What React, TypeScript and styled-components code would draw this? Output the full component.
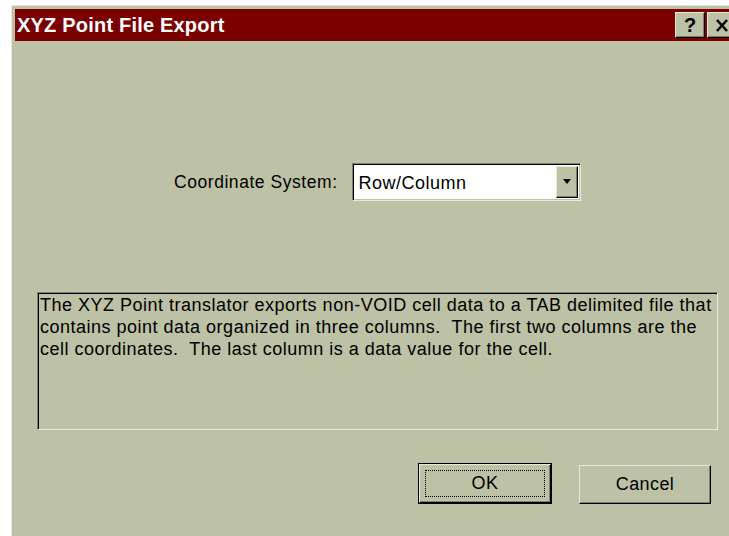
import React from "react";
import styled, { createGlobalStyle } from "styled-components";

const Global = createGlobalStyle`
  html, body {
    margin: 0;
    padding: 0;
    background: #ffffff;
  }
  body {
    font-family: "Liberation Sans", Arial, sans-serif;
  }
`;

const face = "#bdc1a5";
const hilite = "#e6e8d8";
const shadow = "#7e8170";

const Screen = styled.div`
  width: 729px;
  height: 536px;
  overflow: hidden;
  padding: 5px 0 0 11px;
  box-sizing: border-box;
`;

const Window = styled.div`
  width: 729px;
  height: 560px;
  background: ${face};
  border-top: 1px solid ${hilite};
  border-left: 1px solid ${hilite};
  padding: 3px 3px 0 3px;
  box-sizing: border-box;
  display: flex;
  flex-direction: column;
`;

const TitleBar = styled.div`
  height: 32px;
  background: #7b0000;
  display: flex;
  align-items: center;
  padding-left: 2px;
`;

const Title = styled.div`
  flex: 1;
  color: #ffffff;
  font-weight: bold;
  font-size: 20px;
  letter-spacing: 0.2px;
`;

const CaptionButton = styled.div<{ $gap?: number }>`
  width: 30px;
  height: 26px;
  background: ${face};
  box-sizing: border-box;
  border-top: 1px solid ${hilite};
  border-left: 1px solid ${hilite};
  border-right: 1px solid #000;
  border-bottom: 1px solid #000;
  box-shadow: inset -1px -1px 0 ${shadow};
  display: flex;
  align-items: center;
  justify-content: center;
  font-weight: bold;
  font-size: 20px;
  color: #000;
  margin-right: ${(p) => p.$gap ?? 0}px;
`;

const Body = styled.div`
  display: flex;
  flex-direction: column;
  padding-left: 22px;
  width: 681px;
`;

const FieldRow = styled.div`
  display: flex;
  align-items: center;
  margin-top: 122px;
  padding-left: 137px;
  gap: 14px;
`;

const Label = styled.div`
  font-size: 17.5px;
  color: #000;
  letter-spacing: 0.55px;
  white-space: nowrap;
`;

const Combo = styled.div`
  width: 229px;
  height: 38px;
  box-sizing: border-box;
  background: #ffffff;
  border-top: 1px solid ${shadow};
  border-left: 1px solid ${shadow};
  border-right: 1px solid ${hilite};
  border-bottom: 1px solid ${hilite};
  box-shadow: inset 1px 1px 0 #000, inset -1px -1px 0 ${face};
  display: flex;
  align-items: center;
  padding: 2px;
`;

const ComboText = styled.div`
  flex: 1;
  font-size: 18px;
  letter-spacing: 0.5px;
  padding-left: 4px;
  padding-top: 3px;
  color: #000;
`;

const DropButton = styled.div`
  width: 22px;
  height: 32px;
  box-sizing: border-box;
  background: ${face};
  border-top: 1px solid ${hilite};
  border-left: 1px solid ${hilite};
  border-right: 1px solid #000;
  border-bottom: 1px solid #000;
  box-shadow: inset -1px -1px 0 ${shadow};
  display: flex;
  align-items: center;
  justify-content: center;
`;

const Description = styled.div`
  margin-top: 91px;
  height: 138px;
  box-sizing: border-box;
  border-top: 1px solid ${shadow};
  border-left: 1px solid ${shadow};
  border-right: 1px solid ${hilite};
  border-bottom: 1px solid ${hilite};
  box-shadow: inset 1px 1px 0 #000, inset -1px -1px 0 ${face};
  padding: 1px 0 0 2px;
  font-size: 18px;
  line-height: 22px;
  letter-spacing: 0.5px;
  white-space: nowrap;
  overflow: hidden;
  color: #000;
`;

const ButtonRow = styled.div`
  display: flex;
  justify-content: flex-end;
  align-items: flex-start;
  gap: 27px;
  margin-top: 33px;
  padding-right: 7px;
`;

const PushButton = styled.div<{ $default?: boolean }>`
  width: ${(p) => (p.$default ? 134 : 132)}px;
  height: ${(p) => (p.$default ? 41 : 39)}px;
  margin-top: ${(p) => (p.$default ? 0 : 2)}px;
  box-sizing: border-box;
  background: ${face};
  border: ${(p) => (p.$default ? "1px solid #000" : "none")};
  display: flex;
  font-size: 18px;
  letter-spacing: 0.4px;
  color: #000;
`;

const ButtonFace = styled.div`
  flex: 1;
  box-sizing: border-box;
  border-top: 1px solid ${hilite};
  border-left: 1px solid ${hilite};
  border-right: 1px solid #000;
  border-bottom: 1px solid #000;
  box-shadow: inset -1px -1px 0 ${shadow};
  display: flex;
  padding: 5px;
`;

const FocusRing = styled.div<{ $show?: boolean }>`
  flex: 1;
  border: 1px dotted ${(p) => (p.$show ? "#000" : "transparent")};
  display: flex;
  align-items: center;
  justify-content: center;
`;

export default function App() {
  return (
    <>
      <Global />
      <Screen>
        <Window>
          <TitleBar>
            <Title>XYZ Point File Export</Title>
            <CaptionButton $gap={2}>?</CaptionButton>
            <CaptionButton>
              <svg width="14" height="13" viewBox="0 0 14 13">
                <path d="M2 1 L12 12 M12 1 L2 12" stroke="#000" strokeWidth="2.6" />
              </svg>
            </CaptionButton>
          </TitleBar>
          <Body>
            <FieldRow>
              <Label>Coordinate System:</Label>
              <Combo>
                <ComboText>Row/Column</ComboText>
                <DropButton>
                  <svg width="10" height="6" viewBox="0 0 10 6">
                    <path d="M1 0 H9 L5 5 Z" fill="#000" />
                  </svg>
                </DropButton>
              </Combo>
            </FieldRow>
            <Description>
              The XYZ Point translator exports non-VOID cell data to a TAB delimited file that
              <br />
              contains point data organized in three columns.&nbsp; The first two columns are the
              <br />
              cell coordinates.&nbsp; The last column is a data value for the cell.
            </Description>
            <ButtonRow>
              <PushButton $default>
                <ButtonFace>
                  <FocusRing $show>OK</FocusRing>
                </ButtonFace>
              </PushButton>
              <PushButton>
                <ButtonFace>
                  <FocusRing>Cancel</FocusRing>
                </ButtonFace>
              </PushButton>
            </ButtonRow>
          </Body>
        </Window>
      </Screen>
    </>
  );
}
